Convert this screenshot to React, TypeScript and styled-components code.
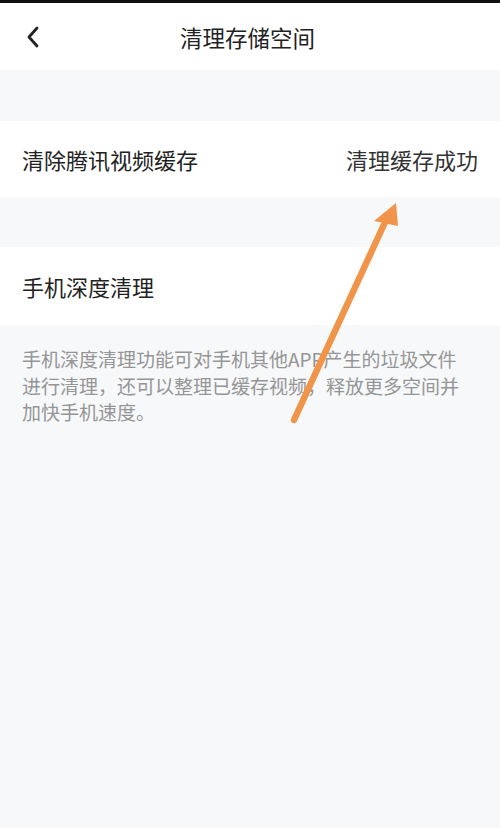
import React from "react";
import styled, { createGlobalStyle } from "styled-components";

const Global = createGlobalStyle`
  html, body { margin: 0; padding: 0; background: #f6f8fa; }
  body { font-family: "Noto Sans CJK SC", "Noto Sans", sans-serif; }
  * { box-sizing: border-box; }
`;

const Page = styled.div`
  position: relative;
  width: 500px;
  min-height: 828px;
  background: #f6f8fa;
  display: flex;
  flex-direction: column;
`;

const TopStrip = styled.div`
  height: 3px;
  background: #111;
`;

const Header = styled.header`
  height: 67px;
  background: #fff;
  display: flex;
  align-items: center;
  justify-content: center;
  position: relative;
`;

const BackButton = styled.button`
  position: absolute;
  left: 20px;
  top: 50%;
  transform: translateY(-50%);
  background: none;
  border: 0;
  padding: 4px;
  display: flex;
`;

const Title = styled.h1`
  margin: 0 0 0 -5px;
  font-size: 22.5px;
  font-weight: 400;
  color: #222;
`;

const Gap = styled.div<{ h: number }>`
  height: ${(p) => p.h}px;
`;

const Row = styled.div<{ h: number }>`
  height: ${(p) => p.h}px;
  background: #fff;
  display: flex;
  align-items: center;
  justify-content: space-between;
  padding: 0 22px;
`;

const RowLabel = styled.span`
  font-size: 22px;
  color: #222;
`;

const RowValue = styled.span`
  font-size: 22px;
  color: #333;
`;

const Desc = styled.p`
  margin: 0;
  padding: 21px 35px 0 22px;
  font-size: 19px;
  line-height: 26.5px;
  color: #959595;
`;

const Arrow = styled.svg`
  position: absolute;
  left: 0;
  top: 0;
  pointer-events: none;
`;

export default function App() {
  return (
    <>
      <Global />
      <Page>
        <TopStrip />
        <Header>
          <BackButton aria-label="back">
            <svg width="18" height="24" viewBox="0 0 18 24">
              <path d="M13 3 L5 12 L13 21" fill="none" stroke="#222" strokeWidth="2.8" strokeLinecap="round" strokeLinejoin="round" />
            </svg>
          </BackButton>
          <Title>清理存储空间</Title>
        </Header>
        <Gap h={51} />
        <Row h={76}>
          <RowLabel>清除腾讯视频缓存</RowLabel>
          <RowValue>清理缓存成功</RowValue>
        </Row>
        <Gap h={50} />
        <Row h={78}>
          <RowLabel>手机深度清理</RowLabel>
        </Row>
        <Desc>
          手机深度清理功能可对手机其他APP产生的垃圾文件进行清理，还可以整理已缓存视频，释放更多空间并加快手机速度。
        </Desc>
        <Arrow width="500" height="828" viewBox="0 0 500 828">
          <line x1="294" y1="420" x2="387" y2="218" stroke="#F0944A" strokeWidth="6.5" strokeLinecap="round" />
          <polygon points="396,203 374,221 398,226" fill="#F0944A" />
        </Arrow>
      </Page>
    </>
  );
}
